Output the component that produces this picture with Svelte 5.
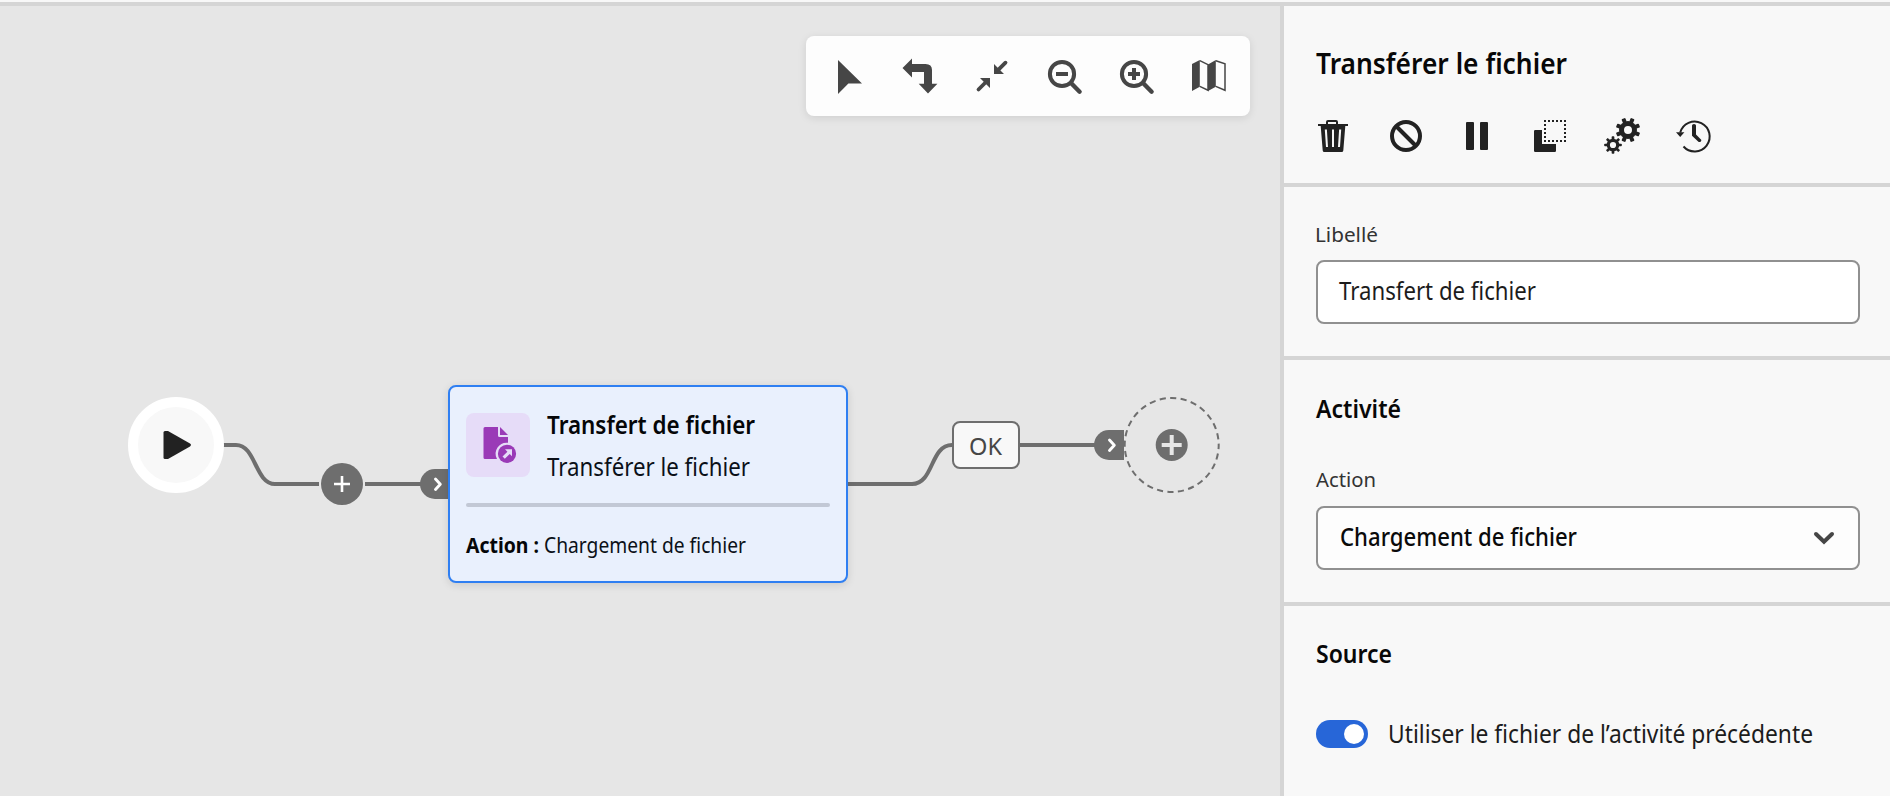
<script>
  const tools = ['pointer', 'route', 'collapse', 'zoomout', 'zoomin', 'map'];
  const actions = ['delete', 'disable', 'pause', 'copy', 'settings', 'history'];
  const teeth = [0, 45, 90, 135, 180, 225, 270, 315];
</script>

{#snippet label(text, width, size, weight = 400, color = '#1c1c1c', dx = 0)}
  <svg class="label" width={width} height={size} role="img" aria-label={text}>
    <text x={dx} y={size * 0.82} textLength={width - dx} lengthAdjust="spacingAndGlyphs" font-size={size} font-weight={weight} fill={color}>{text}</text>
  </svg>
{/snippet}

{#snippet gear(cx, cy, r, inner, tip, w)}
  <g transform="translate({cx} {cy})">
    <circle r={(r + inner) / 2} fill="none" stroke="currentColor" stroke-width={r - inner} />
    {#each teeth as a}
      <rect x={-w / 2} y={-tip} width={w} height={tip - r + 1.2} rx=".8" transform="rotate({a + (r > 7 ? 22.5 : 0)})" fill="currentColor" />
    {/each}
  </g>
{/snippet}

{#snippet icon(name)}
  <svg width="36" height="36" viewBox="0 0 36 36" fill="currentColor">
    {#if name === 'pointer'}
      <path d="M7 2 31 25.6H17.4L7 36Z" />
    {:else if name === 'route'}
      <path d="M-.5 10 9 .6V6h13.5q6.500 0 6.500 6v13.800h5.400L25 35.600l-9.300-9.800H21V14H9v5.400Z" />
    {:else if name === 'collapse'}
      <path d="M19 6 29 16H19ZM5 20H15V30Z" />
      <path d="M30.500 4.700 22.500 12.700M3.500 31.500 11.500 23.500" fill="none" stroke="currentColor" stroke-width="3.800" stroke-linecap="round" />
    {:else if name === 'zoomout' || name === 'zoomin'}
      <g fill="none" stroke="currentColor" stroke-width="4">
        <circle cx="15" cy="16" r="12.100" />
        <path d="M24.500 25.500 32.600 33.700" stroke-linecap="round" stroke-width="4.400" />
        <path d="M9 16h12" />
        {#if name === 'zoomin'}<path d="M15 10v12" />{/if}
      </g>
    {:else if name === 'map'}
      <path d="M1 6 8.800 2V28.800L1 33ZM17 6.400 24.800 2V28.800L17 33Z" />
      <path d="M8.800 2.700 17 6.700V32.300L8.800 28.400M24.800 2.700 34 5.800V32.300L24.800 28.400" fill="none" stroke="currentColor" stroke-width="1.500" />
    {:else if name === 'delete'}
      <path d="M10 6V4q0-2 2-2h8q2 0 2 2v2h10v2h-2.700L27.300 32.400Q27.200 34 25.600 34H8.400Q6.800 34 6.700 32.400L4.700 8H2V6ZM12 6h8V4h-8ZM8.800 11.500l1.200 17.500h2L10.900 11.500ZM16 11.500V29h2V11.500ZM23.100 11.500 22 29h2l1.200-17.500Z" fill-rule="evenodd" />
    {:else if name === 'disable'}
      <g fill="none" stroke="currentColor" stroke-width="4"><circle cx="18" cy="18" r="14" /><path d="M8 8 28 28" /></g>
    {:else if name === 'pause'}
      <rect x="6" y="4" width="8" height="28" rx="1" /><rect x="20" y="4" width="8" height="28" rx="1" />
    {:else if name === 'copy'}
      <path d="M3.200 12H10V26H24v6.800Q24 34 22.800 34H3.200Q2 34 2 32.800V13.200Q2 12 3.200 12Z" />
      <path d="M12 3H34M12 23H34" fill="none" stroke="currentColor" stroke-width="2" stroke-dasharray="2 2" />
      <path d="M13 6V22M33 6V22" fill="none" stroke="currentColor" stroke-width="2" stroke-dasharray="2 2" />
    {:else if name === 'settings'}
      {@render gear(24, 12, 9, 4, 12.3, 4)}
      {@render gear(9, 27, 6.300, 3.100, 8.800, 2.700)}
    {:else}
      <path d="M4.200 14.500A15 15 0 1 1 7.500 28.500" fill="none" stroke="currentColor" stroke-width="2" />
      <path d="M0 14.300h8.400L4.200 19ZM18 6q2 0 2 1.500V16.600l5.200 5.100q.5 1-.6 2-1.200.8-2.200 0L16 17.800V7.500Q16 6 18 6Z" />
    {/if}
  </svg>
{/snippet}

{#snippet arrow()}
  <svg width="30" height="30" viewBox="0 0 30 30"><path d="M15.500 10 20.300 15.200 15.500 20.400" fill="none" stroke="#fff" stroke-width="2.900" stroke-linecap="round" stroke-linejoin="round" /></svg>
{/snippet}

<div class="app">
  <main class="canvas">
    <div class="toolbar">
      {#each tools as name}{@render icon(name)}{/each}
    </div>

    <svg class="edges" width="1280" height="790" viewBox="0 6 1280 790">
      <g fill="none" stroke="#6e6e6e" stroke-width="4">
        <path d="M222 445H236C256 445 255 484 275 484H319M365 484H430" />
        <path d="M848 484H912C934 484 930 445 952 445M1020 445H1104" />
      </g>
      <circle cx="176" cy="445" r="43" fill="#f8f8f8" stroke="#fff" stroke-width="10" />
      <path d="M163.500 432.500Q163.500 431 165 431H168L190 443.600Q192 445 190 446.400L168 459H165Q163.500 459 163.500 457.500Z" fill="#222" />
      <circle cx="342" cy="484" r="21" fill="#6e6e6e" />
      <path d="M334 484H350M342 476V492" stroke="#fff" stroke-width="2.600" />
      <circle cx="1171.700" cy="445" r="47" fill="none" stroke="#6e6e6e" stroke-width="2" stroke-dasharray="6.200 4.350" stroke-dashoffset="2" />
      <circle cx="1171.700" cy="445" r="16" fill="#6e6e6e" />
      <path d="M1161.700 445H1181.700M1171.700 435V455" stroke="#e6e6e6" stroke-width="4" />
    </svg>

    <span class="port in">{@render arrow()}</span>
    <span class="port next">{@render arrow()}</span>
    <div class="ok">{@render label('OK', 33, 24, 400, '#464646')}</div>

    <article class="card">
      <header>
        <div class="tile">
          <svg width="64" height="64" viewBox="0 0 64 64" fill="#9a3ab7">
            <path d="M19 14H32V22.500Q32 24 33.500 24H42V29.800A11 11 0 0 0 31 46H19Q17.500 46 17.500 44.500V15.500Q17.500 14 19 14ZM34 14 42 22H34Z" />
            <circle cx="41" cy="40.800" r="9.100" />
            <path d="M39 36.300h7v7l-2.300-2.300-4.900 4.700-2.300-2.300 4.900-4.700Z" fill="#e6dcf8" />
          </svg>
        </div>
        <div class="names">
          {@render label('Transfert de fichier', 208, 25, 600, '#050608')}
          {@render label('Transférer le fichier', 203, 25, 400, '#0b1018')}
        </div>
      </header>
      <hr />
      <p>{@render label('Action :', 73, 20.500, 700, '#050608')}{@render label('Chargement de fichier', 201, 21, 400, '#0b1018', -1)}</p>
    </article>
  </main>

  <aside class="panel">
    <section class="head">
      <h1>{@render label('Transférer le fichier', 251, 28, 600, '#080808')}</h1>
      <div class="actions">{#each actions as name}{@render icon(name)}{/each}</div>
    </section>
    <section class="name">
      {@render label('Libellé', 62, 20.500, 400, '#333', -1)}
      <div class="field">{@render label('Transfert de fichier', 197, 25)}</div>
    </section>
    <section class="activity">
      <h2>{@render label('Activité', 85, 25, 600, '#080808')}</h2>
      {@render label('Action', 60, 20.500, 400, '#333')}
      <div class="field select">
        {@render label('Chargement de fichier', 236, 25, 500, '#0a0a0a', -1)}
        <svg width="20" height="12" viewBox="0 0 20 12"><path d="M2 2 10 9.700 18 2" fill="none" stroke="#464646" stroke-width="4" stroke-linecap="round" /></svg>
      </div>
    </section>
    <section class="source">
      <h2>{@render label('Source', 76, 25, 600, '#080808')}</h2>
      <div class="option"><span class="switch"></span>{@render label('Utiliser le fichier de l’activité précédente', 423, 25, 400, '#1c1c1c', -2)}</div>
    </section>
  </aside>
</div>

<style>
  :global(body) { margin: 0; overflow: hidden; }
  * { box-sizing: border-box; }
  .app {
    width: 1890px; height: 796px; display: grid; grid-template-columns: 1280px 1fr;
    padding-top: 6px; background: linear-gradient(#f8f8f8 2px, #d5d5d5 2px 6px, #f8f8f8 6px);
    font-family: "Noto Sans", sans-serif;
  }
  svg { display: block; flex: none; overflow: visible; }
  h1, h2, p { margin: 0; }
  .canvas { position: relative; background: #e6e6e6; }
  .edges { position: absolute; inset: 0; }
  .toolbar {
    position: absolute; left: 806px; top: 30px; width: 444px; height: 80px; z-index: 1;
    display: flex; align-items: center; gap: 36px; padding: 0 25px; color: #464646;
    background: #fdfdfd; border-radius: 8px; box-shadow: 0 2px 8px rgb(0 0 0 / .1);
  }
  .port { position: absolute; width: 30px; height: 30px; background: #6e6e6e; border-radius: 15px 0 0 15px; }
  .port.in { left: 420px; top: 463px; }
  .port.next { left: 1094px; top: 424px; }
  .ok {
    position: absolute; left: 952px; top: 415px; width: 68px; height: 48px; padding-left: 15px;
    padding-top: 12px; border: 2px solid #6e6e6e; border-radius: 8px; background: #f8f8f8;
  }
  .card {
    position: absolute; left: 448px; top: 379px; width: 400px; height: 198px; padding: 26px 16px;
    border: 2px solid #2f7ff2; border-radius: 8px; background: #e9f0fd; box-shadow: 0 2px 8px rgb(0 0 0 / .12);
  }
  .card header { display: flex; gap: 17px; height: 64px; }
  .tile { width: 64px; height: 64px; border-radius: 8px; background: #e6dcf8; }
  .names { display: flex; flex-direction: column; gap: 17px; }
  .card hr { margin: 26px 0 0; height: 4px; border: 0; border-radius: 2px; background: #c2c8d5; }
  .card p { display: flex; gap: 6px; padding-top: 29px; }
  .panel { border-left: 4px solid #d5d5d5; background: #f8f8f8; }
  section { padding: 0 30px 0 32px; border-bottom: 4px solid #d5d5d5; }
  .head { height: 181px; padding-top: 45px; }
  .actions { display: flex; gap: 36px; margin-top: 39px; color: #222; }
  .name { height: 173px; padding-top: 38px; }
  .activity { height: 246px; padding-top: 37px; }
  .activity h2 { margin-bottom: 48px; }
  .field {
    display: flex; align-items: center; height: 64px; margin-top: 14.500px; padding: 0 24px 2px 21px;
    border: 2px solid #909090; border-radius: 8px; background: #fff;
  }
  .select { justify-content: space-between; margin-top: 15px; padding-left: 23px; padding-bottom: 0; background: #fdfdfd; }
  .source { border: 0; padding-top: 36px; }
  .option { display: flex; align-items: center; gap: 22px; margin-top: 53px; }
  .switch { width: 52px; height: 28px; padding: 4px; border-radius: 14px; background: #2766d8; }
  .switch::after { content: ""; display: block; width: 20px; height: 20px; margin-left: 24px; border-radius: 50%; background: #fff; }
</style>
